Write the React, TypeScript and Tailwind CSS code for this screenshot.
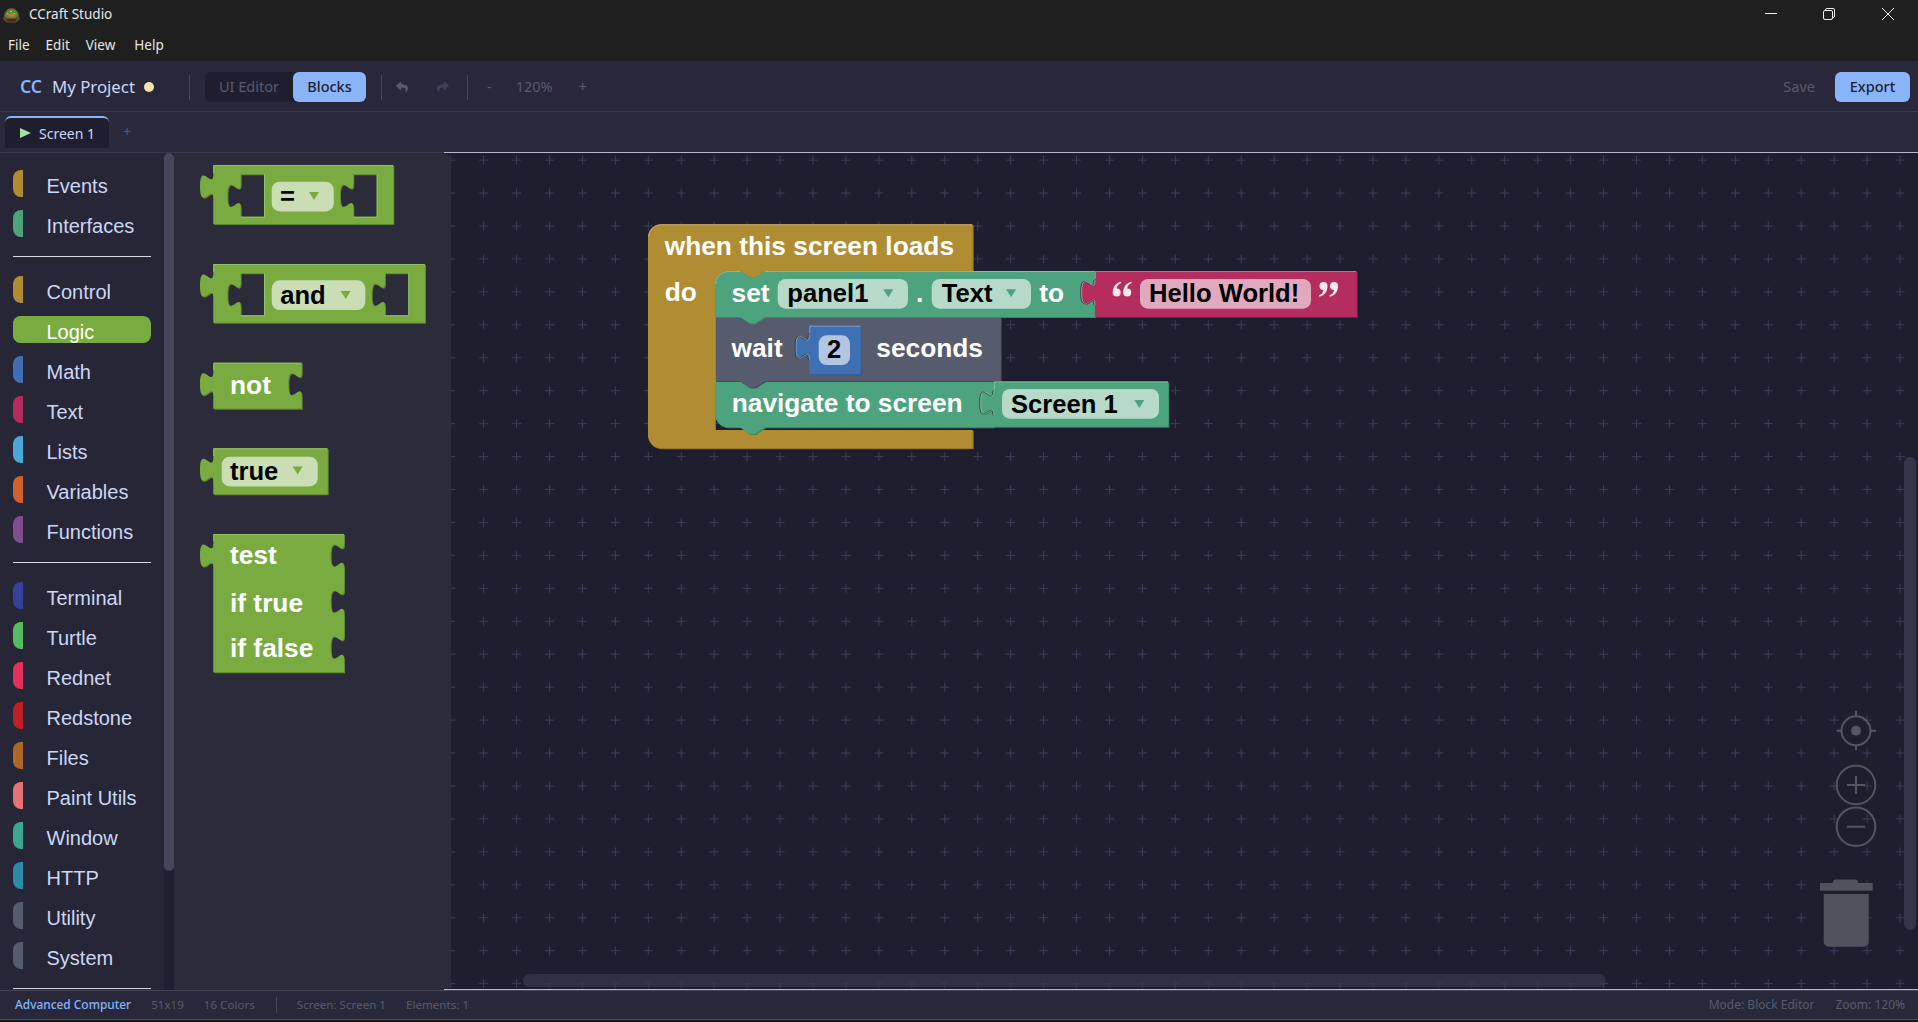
import { FaReply, FaShare } from "react-icons/fa";

const toolboxGroups = [
  [
    { name: "Events", color: "bg-[#b08c33]" },
    { name: "Interfaces", color: "bg-[#4ca37d]" },
  ],
  [
    { name: "Control", color: "bg-[#b08c33]" },
    { name: "Logic", color: "bg-[#7aab40]", active: true },
    { name: "Math", color: "bg-[#4070b4]" },
    { name: "Text", color: "bg-[#b52d5e]" },
    { name: "Lists", color: "bg-[#4aa8d8]" },
    { name: "Variables", color: "bg-[#d2602c]" },
    { name: "Functions", color: "bg-[#7e4f8c]" },
  ],
  [
    { name: "Terminal", color: "bg-[#36429a]" },
    { name: "Turtle", color: "bg-[#57bb5f]" },
    { name: "Rednet", color: "bg-[#e2315a]" },
    { name: "Redstone", color: "bg-[#bd2024]" },
    { name: "Files", color: "bg-[#ad682a]" },
    { name: "Paint Utils", color: "bg-[#e57373]" },
    { name: "Window", color: "bg-[#3ca58e]" },
    { name: "HTTP", color: "bg-[#2f8aa5]" },
    { name: "Utility", color: "bg-[#565c6d]" },
    { name: "System", color: "bg-[#565c6d]" },
  ],
];

const GREEN = { fill: "#7aab40", dark: "#5f8632", light: "#96bf68", field: "#cbddb4" };
const TEAL = { fill: "#4ca37d", dark: "#3d8263", light: "#7fbd9f", field: "#b7d9c9" };
const GOLD = { fill: "#b08c33", dark: "#8d7029", light: "#c8ad6f", field: "#dfd0aa" };
const SLATE = { fill: "#565c6d", dark: "#454a57", light: "#7f8492", field: "#bbbec5" };
const PINK = { fill: "#b52d5e", dark: "#91244b", light: "#ca6c8e", field: "#e1a9be" };
const BLUE = { fill: "#4070b4", dark: "#335a90", light: "#7a9bcb", field: "#b3c6e1" };

type Palette = typeof GREEN;

const TAB_UP = "c 0,-16.6 -13.3,13.3 -13.3,-12.5 s 13.3,4.2 13.3,-12.5";
const TAB_DOWN = "c 0,16.6 -13.3,-13.3 -13.3,12.5 s 13.3,-4.2 13.3,12.5";
const NOTCH_R = "l 10,6.6 5,0 10,-6.6";
const NOTCH_L = "l -10,6.6 -5,0 -10,-6.6";

// block with an output tab on its left side; also used for the input holes
const tabbed = (x: number, y: number, r: number, b: number) =>
  `M ${x},${y} H ${r} V ${b} H ${x} V ${y + 34} ${TAB_UP} Z `;

function Shape({ d, c, edge }: { d: string; c: Palette; edge?: string }) {
  return (
    <g>
      <path d={d} fill={c.dark} fillRule="evenodd" transform="translate(1 1)" />
      <path d={d} fill={c.fill} fillRule="evenodd" />
      {edge && <path d={edge} fill="none" stroke={c.light} strokeWidth="1" />}
    </g>
  );
}

// thin outline round a plugged in output tab, the parent block is behind it
function TabEdge({ x, y }: { x: number; y: number }) {
  return (
    <g fill="none">
      <path d={`M ${x - 1},${y + 34} ${TAB_UP}`} stroke="#2a2a36" strokeOpacity="0.8" strokeWidth="1" />
      <path d={`M ${x},${y + 34} ${TAB_UP}`} stroke="#cfe3d9" strokeOpacity="0.4" strokeWidth="1" />
    </g>
  );
}

function Label({ x, y, children, dark }: { x: number; y: number; children: string; dark?: boolean }) {
  return (
    <text
      x={x}
      y={y}
      fill={dark ? "#000000" : "#ffffff"}
      fontSize={dark ? 25.6 : 26.3}
      fontWeight="700"
      fontFamily='"Liberation Sans", Arial, sans-serif'
    >
      {children}
    </text>
  );
}

function Field({ x, y, r, c }: { x: number; y: number; r: number; c: Palette }) {
  return <rect x={x} y={y} width={r - x} height={29.7} rx={8} fill={c.field} />;
}

function Caret({ x, y, c }: { x: number; y: number; c: Palette }) {
  return <path d={`M ${x},${y} h 10 l -5,8 Z`} fill={c.fill} />;
}

// Blockly's quote images
function QuoteMark({ x, y, close }: { x: number; y: number; close?: boolean }) {
  const mark = "M 8,0 C 2.5,1.5 0,6 0,10.8 a 4,4 0 1 0 4,-4 c 0,-2.2 2,-4.6 4.6,-5.4 Z";
  return (
    <g fill="#f7e8ee" transform={close ? `translate(${x + 19} ${y + 15}) rotate(180)` : `translate(${x} ${y})`}>
      <path d={mark} />
      <path d={mark} transform="translate(10.5 0)" />
    </g>
  );
}

function FlyoutBlocks() {
  const eqHoles =
    tabbed(240.7, 174.3, 264, 216.7) + tabbed(353.3, 174.3, 376.7, 216.7);
  const andHoles =
    tabbed(240.7, 273.3, 264, 315.3) + tabbed(385, 273.3, 408.3, 315.3);
  return (
    <g>
      <Shape
        d={tabbed(213.3, 165, 393.3, 224) + eqHoles}
        c={GREEN}
        edge="M 213.8,173 V 165.5 H 393 M 264.5,174 V 217.2 H 241 M 377.2,174 V 217.2 H 353.5"
      />
      <Field x={271.7} y={181.7} r={333.7} c={GREEN} />
      <Label x={280} y={205} dark>=</Label>
      <Caret x={309} y={192} c={GREEN} />

      <Shape
        d={tabbed(213.3, 264, 425, 322.7) + andHoles}
        c={GREEN}
        edge="M 213.8,272 V 264.5 H 424.7 M 264.5,273 V 315.8 H 241 M 408.8,273 V 315.8 H 385"
      />
      <Field x={271.7} y={280.3} r={365.3} c={GREEN} />
      <Label x={280.2} y={303.5} dark>and</Label>
      <Caret x={340.7} y={291} c={GREEN} />

      <Shape
        d={`M 213.3,362.7 H 301.7 V 371.7 ${TAB_DOWN} V 408.7 H 213.3 V 396.7 ${TAB_UP} Z`}
        c={GREEN}
        edge="M 213.8,370 V 363.2 H 301.2"
      />
      <Label x={230} y={393.5}>not</Label>

      <Shape
        d={tabbed(213.3, 448.3, 327.7, 494.3)}
        c={GREEN}
        edge="M 213.8,456 V 448.8 H 327.2"
      />
      <Field x={221.7} y={456.7} r={317.7} c={GREEN} />
      <Label x={230} y={479.5} dark>true</Label>
      <Caret x={292.7} y={466.5} c={GREEN} />

      <Shape
        d={`M 213.3,534 H 344 V 543 ${TAB_DOWN} V 589 ${TAB_DOWN} V 635 ${TAB_DOWN} V 672.3 H 213.3 V 568 ${TAB_UP} Z`}
        c={GREEN}
        edge="M 213.8,541 V 534.5 H 343.5"
      />
      <Label x={230} y={564.3}>test</Label>
      <Label x={230} y={611.7}>if true</Label>
      <Label x={230} y={657.3}>if false</Label>
    </g>
  );
}

function WorkspaceBlocks() {
  return (
    <g>
      <Shape
        d={`M 661,224.3 H 972.7 V 271 H 765 ${NOTCH_L} H 728 a 13,13 0 0 0 -13,13 V 430 H 972.7 V 448.3 H 661 a 13,13 0 0 1 -13,-13 V 237.3 a 13,13 0 0 1 13,-13 Z`}
        c={GOLD}
        edge="M 648.5,237 a 12.5,12.5 0 0 1 12.5,-12.2 H 972"
      />
      <Label x={664.7} y={255}>when this screen loads</Label>
      <Label x={664.7} y={300.7}>do</Label>

      <Shape
        d={`M 715,381 H 740 ${NOTCH_R} H 994 V 427.3 H 765 ${NOTCH_L} H 728 a 13,13 0 0 1 -13,-13 Z`}
        c={TEAL}
        edge="M 715.5,381.5 H 740 M 765,381.5 H 994"
      />
      <Label x={731.7} y={412}>navigate to screen</Label>

      <Shape
        d={`M 715,317 H 740 ${NOTCH_R} H 1000.7 V 381 H 765 ${NOTCH_L} H 715 Z`}
        c={SLATE}
        edge="M 715.5,381 V 317.5 H 740 M 765,317.5 H 1000"
      />
      <Label x={731.5} y={356.7}>wait</Label>
      <Label x={876.3} y={356.7}>seconds</Label>

      <Shape
        d={tabbed(809.3, 325.7, 860.7, 374.3)}
        c={BLUE}
        edge="M 809.8,333 V 326.2 H 860.2"
      />
      <TabEdge x={809.3} y={325.7} />
      <Field x={818.7} y={335.3} r={850} c={BLUE} />
      <Label x={827} y={357.5} dark>2</Label>

      <Shape
        d={`M 728,271 H 740 ${NOTCH_R} H 1095 V 317 H 765 ${NOTCH_L} H 715 V 284 a 13,13 0 0 1 13,-13 Z`}
        c={TEAL}
        edge="M 715.5,284 a 12.5,12.5 0 0 1 12.5,-12.5 H 740 M 765,271.5 H 1095"
      />
      <Label x={731.5} y={301.7}>set</Label>
      <Field x={777.7} y={279} r={908} c={TEAL} />
      <Label x={787.3} y={301.7} dark>panel1</Label>
      <Caret x={883.3} y={289.3} c={TEAL} />
      <Label x={916} y={301.7}>.</Label>
      <Field x={931.7} y={279} r={1031} c={TEAL} />
      <Label x={941.7} y={301.7} dark>Text</Label>
      <Caret x={1006} y={289.3} c={TEAL} />
      <Label x={1039.3} y={301.7}>to</Label>

      <Shape
        d={tabbed(1095, 271, 1356.7, 316.7)}
        c={PINK}
        edge="M 1095.5,279 V 271.5 H 1356"
      />
      <TabEdge x={1095} y={271} />
      <QuoteMark x={1112.7} y={281.7} />
      <Field x={1140} y={279} r={1311} c={PINK} />
      <Label x={1149} y={301.7} dark>Hello World!</Label>
      <QuoteMark x={1319} y={281.7} close />

      <Shape
        d={tabbed(994, 381.5, 1168.3, 426.7)}
        c={TEAL}
        edge="M 994.5,389 V 382 H 1168"
      />
      <TabEdge x={994} y={381.5} />
      <Field x={1002} y={389} r={1159} c={TEAL} />
      <Label x={1011} y={412.7} dark>Screen 1</Label>
      <Caret x={1134.3} y={400} c={TEAL} />
    </g>
  );
}

function WorkspaceControls() {
  return (
    <g fill="none" stroke="#55555f" strokeWidth="2">
      <circle cx={1856} cy={730.7} r={14.5} />
      <circle cx={1856} cy={730.7} r={5} fill="#55555f" stroke="none" />
      <path d="M 1856,711 V 717 M 1856,745 V 750.5 M 1836.5,730.7 H 1842 M 1870.5,730.7 H 1876" />
      <circle cx={1856} cy={785} r={19.3} />
      <path d="M 1847,785 H 1865 M 1856,776 V 794" />
      <circle cx={1856} cy={826.7} r={19.3} />
      <path d="M 1847,826.7 H 1865" />
      <g fill="#52525f" stroke="none">
        <path d="M 1833,883.5 V 882.5 a 3,3 0 0 1 3,-3 H 1855 a 3,3 0 0 1 3,3 V 883.5 Z" />
        <rect x={1820} y={883} width={52.7} height={7.7} />
        <path d="M 1823.7,894 H 1868.7 V 941.7 a 5,5 0 0 1 -5,5 H 1828.7 a 5,5 0 0 1 -5,-5 Z" />
      </g>
    </g>
  );
}

function AppLogo() {
  return (
    <svg viewBox="0 0 17 15" className="ml-[3px] h-[15px] w-[17px]">
      <path d="M 1,8 C 1,3 5,0 8.5,0 C 12,0 16,3 16,8 L 17,11 L 13,14.5 H 4 L 0,11 Z" fill="#6a4a2e" />
      <path d="M 2,8 C 2,4 5,1 8.5,1 C 12,1 15,4 15,8 L 12,10 H 5 Z" fill="#4f8f3c" />
      <path d="M 4,7 C 6,4.5 11,4.5 13,7 L 11,8.5 H 6 Z" fill="#c8752e" />
      <path d="M 7,3 H 9 V 4 H 7 Z M 11,5 H 12 V 6 H 11 Z M 4,5 H 5 V 6 H 4 Z" fill="#a5d063" />
      <path d="M 3,11 H 14 L 12.5,13.5 H 4.5 Z" fill="#3f2c1b" />
    </svg>
  );
}

export default function App() {
  return (
    <div className="flex h-[1022px] w-[1918px] flex-col overflow-hidden bg-[#1a1a1a] font-['Noto_Sans',sans-serif]">
      <header className="h-[61px] shrink-0 bg-[#1f1f1f] text-[#e6e6e6]">
        <div className="flex h-[30px] items-center">
          <AppLogo />
          <span className="ml-[9px] text-[13.5px] leading-none">CCraft Studio</span>
          <div className="ml-auto flex items-center text-[#eeeeee]">
            <svg viewBox="0 0 12 12" className="absolute left-[1765px] top-[8px] h-3 w-3" fill="none" stroke="currentColor" strokeWidth="1">
              <path d="M 0,5.5 H 12" />
            </svg>
            <svg viewBox="0 0 12 12" className="absolute left-[1823px] top-[8px] h-3 w-3" fill="none" stroke="currentColor" strokeWidth="1">
              <rect x="0.5" y="2.5" width="9" height="9" rx="1.5" />
              <path d="M 2.5,2.5 V 2 a 1.5,1.5 0 0 1 1.5,-1.5 H 10 a 1.5,1.5 0 0 1 1.5,1.5 V 8 a 1.5,1.5 0 0 1 -1.5,1.5 H 9.5" />
            </svg>
            <svg viewBox="0 0 12 12" className="absolute left-[1882px] top-[8px] h-3 w-3" fill="none" stroke="currentColor" strokeWidth="1">
              <path d="M 0,0 L 12,12 M 12,0 L 0,12" />
            </svg>
          </div>
        </div>
        <nav className="flex h-[31px] items-center pl-2 text-[13.5px] leading-none">
          <span>File</span>
          <span className="ml-[16px]">Edit</span>
          <span className="ml-[16px]">View</span>
          <span className="ml-[19px]">Help</span>
        </nav>
      </header>

      <div className="flex h-[51px] shrink-0 items-center border-b border-[#3a3a4e] bg-[#28283a] pt-[2px] text-[#cdd6f4]">
        <span className="ml-5 w-8 text-[17.5px] font-semibold leading-none text-[#89b4fa]">CC</span>
        <span className="w-[92px] text-[16.8px] leading-none">My Project</span>
        <span className="ml-0 h-[10px] w-[10px] rounded-full bg-[#f9e2af]" />
        <span className="ml-[35px] h-[25px] w-px bg-[#45475a]" />
        <div className="ml-[15px] flex h-[30px] w-[161px] items-center rounded-md bg-[#1e1e2e] text-[14.5px]">
          <span className="flex h-full w-[88px] items-center justify-center text-[#585b70]">UI Editor</span>
          <span className="flex h-full w-[73px] items-center justify-center rounded-md bg-[#89b4fa] font-medium text-[#1e1e2e]">Blocks</span>
        </div>
        <span className="ml-[15px] h-[25px] w-px bg-[#45475a]" />
        <FaReply className="ml-[14px] h-3 w-3 text-[#585b70]" />
        <FaShare className="ml-[29px] h-3 w-3 text-[#3f4055]" />
        <span className="ml-[18px] h-[25px] w-px bg-[#45475a]" />
        <span className="ml-[19px] text-[14.5px] text-[#585b70]">-</span>
        <span className="ml-6 text-[14.5px] text-[#585b70]">120%</span>
        <span className="ml-[26px] text-[14.5px] text-[#585b70]">+</span>
        <span className="ml-auto text-[14.5px] text-[#585b70]">Save</span>
        <span className="ml-5 mr-2 flex h-[30px] w-[75px] items-center justify-center rounded-md bg-[#89b4fa] text-[14.5px] font-medium text-[#1e1e2e]">Export</span>
      </div>

      <div className="flex h-[41px] shrink-0 items-start border-b border-[#3a3a4e] bg-[#2a2a3c] pl-[5px] pt-1 text-[#cdd6f4]">
        <div className="flex h-8 w-[104px] items-center rounded-t-md border-t-2 border-[#89b4fa] bg-[#1e1e2e] pl-[15px]">
          <svg viewBox="0 0 11 10" className="h-[10px] w-[11px]" fill="#a6e3a1">
            <path d="M 0,0 L 11,5 L 0,10 Z" />
          </svg>
          <span className="ml-2 text-[14px]">Screen 1</span>
        </div>
        <span className="ml-[14px] mt-[5px] text-[14px] text-[#585b70]">+</span>
      </div>

      <main className="flex h-[837px] shrink-0">
        <aside className="h-full w-[164px] shrink-0 overflow-hidden bg-[#262636] pl-[13px] pr-[13px] pt-[17px] font-['Liberation_Sans',Arial,sans-serif]">
          {toolboxGroups.map((group, i) => (
            <div key={i}>
              <div className="flex flex-col gap-[13px]">
                {group.map((item) => (
                  <div
                    key={item.name}
                    className={`flex h-[27px] items-center ${item.active ? "rounded-lg bg-[#7aab40] text-white" : "text-[#cdd6f4]"}`}
                  >
                    <span className={`h-full w-[10px] shrink-0 rounded-l-lg ${item.color}`} />
                    <span className="ml-[23.5px] pt-1 text-[20px] leading-none whitespace-nowrap">{item.name}</span>
                  </div>
                ))}
              </div>
              <div className="my-[19px] h-px bg-[#d8d8e0]" />
            </div>
          ))}
        </aside>

        <div className="h-full w-[10px] shrink-0 bg-[#1f1f2f]">
          <div className="h-[718px] rounded-full bg-[#45475a]" />
        </div>

        <div className="relative h-full flex-1 bg-[#1e1e2e]">
          <div className="absolute left-[270px] right-0 top-[-1px] z-10 h-px bg-[#b8b8c2]" />
          <div className="absolute bottom-0 left-[270px] right-0 z-10 h-px bg-[#b8b8c2]" />

          <svg className="absolute inset-0 h-full w-full" width="1744" height="837">
            <defs>
              <pattern id="grid" width="32.94" height="32.94" patternUnits="userSpaceOnUse" x="8.64" y="2.62">
                <path d="M 0,4.5 H 9 M 4.5,0 V 9" stroke="#3c3c58" strokeWidth="1" />
              </pattern>
            </defs>
            <rect width="1744" height="837" fill="url(#grid)" />
          </svg>

          <div className="absolute inset-y-0 left-0 w-[277px] rounded-r-lg bg-[#2b2b3b]/[0.97]" />

          <div className="absolute right-[2px] top-[304px] h-[473px] w-3 rounded-full bg-[#34344a]" />
          <div className="absolute bottom-[3px] left-[349px] h-[13px] w-[1083px] rounded-full bg-[#34344a]/80" />

          <svg className="absolute inset-0 h-full w-full" width="1744" height="837">
            <g transform="translate(-174 -153)">
              <FlyoutBlocks />
              <WorkspaceBlocks />
              <WorkspaceControls />
            </g>
          </svg>
        </div>
      </main>

      <footer className="relative flex h-[30px] shrink-0 items-center border-y border-[#45475a] bg-[#28283a] pl-[15px] text-[11.6px] text-[#585b70]">
        <span className="text-[11.9px] font-medium text-[#89b4fa]">Advanced Computer</span>
        <span className="ml-[20px]">51x19</span>
        <span className="ml-[20px]">16 Colors</span>
        <span className="ml-[21px] h-[16px] w-px bg-[#45475a]" />
        <span className="ml-[20px]">Screen: Screen 1</span>
        <span className="ml-[20px]">Elements: 1</span>
        <span className="ml-auto text-[12px]">Mode: Block Editor</span>
        <span className="ml-[21px] mr-[13px] text-[12px]">Zoom: 120%</span>
      </footer>
    </div>
  );
}
